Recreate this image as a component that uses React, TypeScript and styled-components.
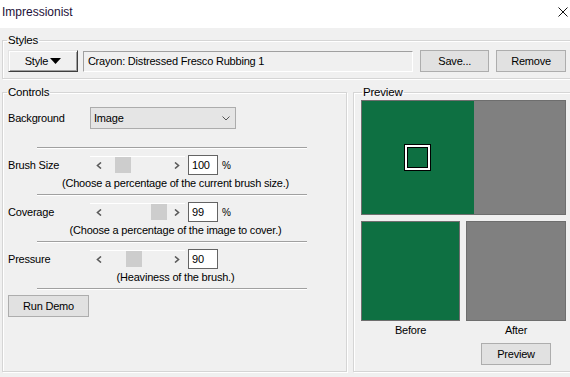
import React from 'react';
import styled, { createGlobalStyle } from 'styled-components';

const GlobalStyle = createGlobalStyle`
  html, body {
    margin: 0;
    padding: 0;
    background: #f0f0f0;
    overflow: hidden;
  }
  body {
    font-family: "Liberation Sans", Arial, sans-serif;
    font-size: 11px;
    letter-spacing: -0.2px;
    color: #000;
  }
  button {
    letter-spacing: -0.2px;
  }
`;

const Window = styled.div`
  width: 576px;
  height: 377px;
  display: flex;
  flex-direction: column;
`;

const TitleBar = styled.div`
  height: 28px;
  flex: none;
  background: #ffffff;
  display: flex;
  align-items: center;
  justify-content: space-between;
  padding: 0 8px 4px 2px;
  box-sizing: border-box;
  font-size: 12px;
  letter-spacing: 0;
  color: #1d0f38;
`;

const CloseIcon = styled.svg`
  width: 10px;
  height: 10px;
`;

const Body = styled.div`
  flex: 1;
  display: flex;
  flex-direction: column;
  padding: 5px 4px 0 2px;
`;

const Group = styled.fieldset`
  margin: 0;
  padding: 3px 5px 6px 5px;
  border: 1px solid #d5d5d5;
  box-shadow: inset 1px 1px 0 #ffffff, 1px 1px 0 #ffffff;
  min-width: 0;
`;

// the legend is placed after the fieldset padding, so the indent is relative to it
const Legend = styled.legend<{ $indent: number }>`
  margin-left: ${(p) => p.$indent}px;
  padding: 0 1px;
  line-height: 14px;
  font-size: 11.5px;
`;

const StylesRow = styled.div`
  display: flex;
  align-items: center;
  height: 22px;
`;

const ClassicButton = styled.button`
  width: 70px;
  height: 22px;
  padding: 0;
  background: #f0f0f0;
  border: 1px solid;
  border-color: #e3e3e3 #404040 #404040 #e3e3e3;
  box-shadow: inset 1px 1px 0 #ffffff, inset -1px -1px 0 #a0a0a0;
  font: inherit;
  display: flex;
  align-items: center;
  justify-content: center;
  gap: 2px;
`;

const ReadOnlyField = styled.div`
  width: 331px;
  height: 21px;
  margin-left: 5px;
  box-sizing: border-box;
  border: 1px solid;
  border-color: #a0a0a0 #ffffff #ffffff #a0a0a0;
  background: #f0f0f0;
  display: flex;
  align-items: center;
  padding-left: 4px;
`;

const FlatButton = styled.button<{ $w: number }>`
  width: ${(p) => p.$w}px;
  height: 22px;
  padding: 0;
  background: #e1e1e1;
  border: 1px solid #adadad;
  font: inherit;
  color: #000;
`;

const SaveButton = styled(FlatButton)`
  margin-left: 7px;
`;

const MainRow = styled.div`
  display: flex;
  gap: 6px;
  margin-top: 6px;
  height: 287px;
`;

const ControlsGroup = styled(Group)`
  width: 345px;
  box-sizing: border-box;
  padding: 8px 5px 0 5px;
  display: flex;
  flex-direction: column;
`;

const PreviewGroup = styled(Group)`
  flex: 1;
  padding: 1px 0 0 7px;
  display: flex;
  flex-direction: column;
`;

const Row = styled.div`
  display: flex;
  align-items: center;
  height: 22px;
`;

const ParamRow = styled(Row)`
  height: 20px;
  margin-top: 6px;
`;

const FieldLabel = styled.span`
  width: 82px;
  flex: none;
`;

const Dropdown = styled.div`
  width: 146px;
  height: 22px;
  box-sizing: border-box;
  border: 1px solid #acacac;
  background: #e5e5e5;
  display: flex;
  align-items: center;
  justify-content: space-between;
  padding: 0 5px 0 3px;
`;

const Separator = styled.div<{ $top: number }>`
  margin: ${(p) => p.$top}px 0 0 29px;
  width: 270px;
  height: 1px;
  background: #a0a0a0;
  border-bottom: 1px solid #ffffff;
`;

const Slider = styled.div`
  width: 95px;
  height: 18px;
  display: flex;
  border-top: 1px solid #ffffff;
  box-sizing: border-box;
`;

const SliderArrow = styled.div`
  width: 17px;
  flex: none;
  display: flex;
  align-items: center;
  justify-content: center;
`;

const SliderTrack = styled.div`
  flex: 1;
  display: flex;
  align-items: flex-start;
`;

const Thumb = styled.div<{ $pos: number }>`
  width: 16px;
  height: 16px;
  margin-left: ${(p) => p.$pos}px;
  background: #cdcdcd;
`;

const NumberBox = styled.div`
  width: 30px;
  height: 20px;
  box-sizing: border-box;
  margin-left: 3px;
  border: 1px solid #646464;
  background: #fff;
  display: flex;
  align-items: center;
  padding-left: 3px;
`;

const Percent = styled.span`
  margin-left: 4px;
  font-size: 10px;
`;

const Hint = styled.div`
  margin-top: 1px;
  height: 14px;
  line-height: 14px;
  text-align: center;
  padding-left: 2px;
`;

const DemoButton = styled(FlatButton)`
  margin-top: 5px;
`;

const BigPreview = styled.div`
  width: 205px;
  height: 115px;
  box-sizing: border-box;
  border: 1px solid #6e6e6e;
  display: flex;
`;

const Swatch = styled.div<{ $color: string }>`
  background: ${(p) => p.$color};
  height: 100%;
`;

const ImageHalf = styled(Swatch)`
  width: 112px;
  position: relative;
`;

const ResultHalf = styled(Swatch)`
  flex: 1;
`;

const Marker = styled.div`
  position: absolute;
  left: 42px;
  top: 43px;
  width: 27px;
  height: 27px;
  box-sizing: border-box;
  border: 1px solid #000;
  box-shadow: inset 0 0 0 2px #fff, inset 0 0 0 3px #000;
`;

const CompareRow = styled.div`
  display: flex;
  gap: 6px;
  margin-top: 6px;
`;

const CompareColumn = styled.div<{ $w: number }>`
  width: ${(p) => p.$w}px;
  display: flex;
  flex-direction: column;
  align-items: center;
`;

const CompareBox = styled.div<{ $color: string }>`
  width: 100%;
  height: 100px;
  box-sizing: border-box;
  border: 1px solid #6e6e6e;
  background: ${(p) => p.$color};
`;

const CompareLabel = styled.div`
  margin-top: 2px;
  line-height: 14px;
`;

const PreviewButton = styled(FlatButton)`
  margin-top: 6px;
`;

const GREEN = '#0e7042';
const GREY = '#808080';

const Chevron = ({ dir }: { dir: 'left' | 'right' }) => (
  <svg width="6" height="7" viewBox="0 0 6 7">
    <path
      d={dir === 'left' ? 'M5 0.5 L1.5 3.5 L5 6.5' : 'M1 0.5 L4.5 3.5 L1 6.5'}
      fill="none"
      stroke="#5a5a5a"
      strokeWidth="1.6"
    />
  </svg>
);

const params = [
  { label: 'Brush Size', pos: 8, value: '100', hint: '(Choose a percentage of the current brush size.)', percent: true, top: 18 },
  { label: 'Coverage', pos: 44, value: '99', hint: '(Choose a percentage of the image to cover.)', percent: true, top: 4 },
  { label: 'Pressure', pos: 19, value: '90', hint: '(Heaviness of the brush.)', percent: false, top: 4 },
];

export default function App() {
  return (
    <Window>
      <GlobalStyle />
      <TitleBar>
        <span>Impressionist</span>
        <CloseIcon viewBox="0 0 10 10">
          <path d="M0.5 0.5 L9.5 9.5 M9.5 0.5 L0.5 9.5" stroke="#111" strokeWidth="1" />
        </CloseIcon>
      </TitleBar>
      <Body>
        <Group>
          <Legend $indent={-1}>Styles</Legend>
          <StylesRow>
            <ClassicButton>
              Style
              <svg width="11" height="6" viewBox="0 0 11 6">
                <path d="M0 0 H11 L5.5 6 Z" fill="#000" />
              </svg>
            </ClassicButton>
            <ReadOnlyField>Crayon: Distressed Fresco Rubbing 1</ReadOnlyField>
            <SaveButton $w={69}>Save...</SaveButton>
            <SaveButton $w={70}>Remove</SaveButton>
          </StylesRow>
        </Group>
        <MainRow>
          <ControlsGroup>
            <Legend $indent={-1}>Controls</Legend>
            <Row>
              <FieldLabel>Background</FieldLabel>
              <Dropdown>
                Image
                <svg width="8" height="5" viewBox="0 0 8 5">
                  <path d="M0.5 0.5 L4 4 L7.5 0.5" fill="none" stroke="#555" strokeWidth="1" />
                </svg>
              </Dropdown>
            </Row>
            {params.map((p) => (
              <React.Fragment key={p.label}>
                <Separator $top={p.top} />
                <ParamRow>
                  <FieldLabel>{p.label}</FieldLabel>
                  <Slider>
                    <SliderArrow>
                      <Chevron dir="left" />
                    </SliderArrow>
                    <SliderTrack>
                      <Thumb $pos={p.pos} />
                    </SliderTrack>
                    <SliderArrow>
                      <Chevron dir="right" />
                    </SliderArrow>
                  </Slider>
                  <NumberBox>{p.value}</NumberBox>
                  {p.percent && <Percent>%</Percent>}
                </ParamRow>
                <Hint>{p.hint}</Hint>
              </React.Fragment>
            ))}
            <Separator $top={4} />
            <DemoButton $w={81}>Run Demo</DemoButton>
          </ControlsGroup>
          <PreviewGroup>
            <Legend $indent={1}>Preview</Legend>
            <BigPreview>
              <ImageHalf $color={GREEN}>
                <Marker />
              </ImageHalf>
              <ResultHalf $color={GREY} />
            </BigPreview>
            <CompareRow>
              <CompareColumn $w={99}>
                <CompareBox $color={GREEN} />
                <CompareLabel>Before</CompareLabel>
              </CompareColumn>
              <CompareColumn $w={100}>
                <CompareBox $color={GREY} />
                <CompareLabel>After</CompareLabel>
                <PreviewButton $w={70}>Preview</PreviewButton>
              </CompareColumn>
            </CompareRow>
          </PreviewGroup>
        </MainRow>
      </Body>
    </Window>
  );
}
